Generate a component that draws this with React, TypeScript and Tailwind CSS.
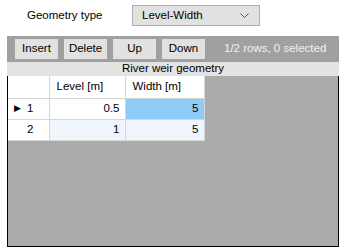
import React from "react";

function App() {
  const rows = [
    { id: 1, level: "0.5", width: "5", current: true },
    { id: 2, level: "1", width: "5", current: false },
  ];
  return (
    <div
      className="w-[346px] h-[250px] bg-white text-[11.5px] text-black overflow-hidden"
      style={{ fontFamily: '"Liberation Sans", Arial, sans-serif' }}
    >
      <div className="flex items-center h-[30px] pt-[1px]">
        <span className="ml-[27px] w-[105px]">Geometry type</span>
        <div className="w-[128px] h-[21px] bg-[#e1e1e1] border border-[#adadad] flex items-center justify-between pl-[9px] pr-[9px]">
          <span>Level-Width</span>
          <svg width="9" height="6" viewBox="0 0 9 6" className="mr-[1px]">
            <path d="M0.5 0.5 L4.5 4.5 L8.5 0.5" fill="none" stroke="#555" strokeWidth="1" />
          </svg>
        </div>
      </div>
      <div className="mx-[7px] mt-[6px] h-[26px] bg-[#a0a0a0] flex items-center gap-[6px] pl-[8px]">
        {["Insert", "Delete", "Up", "Down"].map((b) => (
          <div
            key={b}
            className="w-[43px] h-[20px] bg-[#e1e1e1] border border-[#e1e1e1] flex items-center justify-center"
          >
            {b}
          </div>
        ))}
        <span className="ml-[13px] text-[#f2f2f2]">1/2 rows, 0 selected</span>
      </div>
      <div className="mx-[7px] h-[14px] bg-[#e3e3e3] flex items-center justify-center leading-none">
        River weir geometry
      </div>
      <div className="mx-[7px] h-[171px] bg-[#ababab] border border-black border-t-0">
        <table className="border-collapse bg-white">
          <thead>
            <tr className="h-[22px]">
              <th className="w-[41px] border border-[#d6d6d6] border-l-0 border-t-0 font-normal"></th>
              <th className="w-[76px] border border-[#d6d6d6] border-t-0 font-normal text-left pl-[7px]">Level [m]</th>
              <th className="w-[79px] border border-[#d6d6d6] border-t-0 font-normal text-left pl-[7px]">Width [m]</th>
            </tr>
          </thead>
          <tbody>
            {rows.map((r) => (
              <tr key={r.id} className="h-[21px]">
                <td className="border border-[#d6d6d6] border-l-0 pl-[6px]">
                  <div className="flex items-center">
                    <span className="w-[13px] text-[9px] leading-none">{r.current ? "▶" : ""}</span>
                    <span>{r.id}</span>
                  </div>
                </td>
                <td
                  className={
                    "border border-[#d6d6d6] text-right pr-[5px] " +
                    (r.current ? "bg-white" : "bg-[#f0f5fb]")
                  }
                >
                  {r.level}
                </td>
                <td
                  className={
                    "border border-[#d6d6d6] text-right pr-[5px] " +
                    (r.current ? "bg-[#8ecbf8]" : "bg-[#f0f5fb]")
                  }
                >
                  {r.width}
                </td>
              </tr>
            ))}
          </tbody>
        </table>
      </div>
    </div>
  );
}

export default App;
